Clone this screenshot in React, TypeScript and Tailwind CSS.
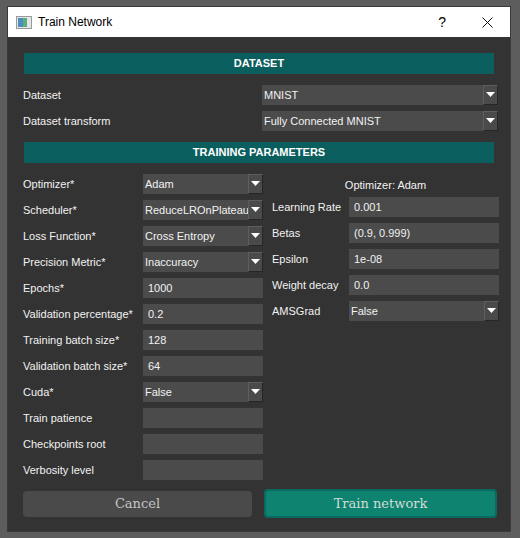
import React from "react";

const font = { fontFamily: '"Liberation Sans", Arial, sans-serif' };

const Arrow = () => (
  <div className="w-[15px] h-[20px] shrink-0 bg-[#4a4a4a] border-t border-l border-t-[#5e5e5e] border-l-[#5e5e5e] border-b border-r border-b-[#262626] border-r-[#262626] flex items-center justify-center">
    <svg width="9" height="6" viewBox="0 0 9 6">
      <polygon points="0,0 9,0 4.5,5" fill="#ffffff" />
    </svg>
  </div>
);

const Select = ({ value, w }: { value: string; w: string }) => (
  <div className={`${w} h-[20px] flex bg-[#4b4b4b]`}>
    <div className="flex-1 flex items-center pl-[2px] text-[11px] text-[#f2f2f2] overflow-hidden whitespace-nowrap">
      {value}
    </div>
    <Arrow />
  </div>
);

const Input = ({ value, w }: { value: string; w: string }) => (
  <div className={`${w} h-[20px] flex items-center pl-[5px] bg-[#4b4b4b] text-[11px] text-[#f2f2f2]`}>
    {value}
  </div>
);

const Header = ({ title }: { title: string }) => (
  <div className="w-[470px] h-[21px] ml-[16px] bg-[#0b5e5e] flex items-center justify-center text-[11px] font-bold text-white">
    {title}
  </div>
);

const leftRows: { label: string; value: string; select?: boolean }[] = [
  { label: "Optimizer*", value: "Adam", select: true },
  { label: "Scheduler*", value: "ReduceLROnPlateau", select: true },
  { label: "Loss Function*", value: "Cross Entropy", select: true },
  { label: "Precision Metric*", value: "Inaccuracy", select: true },
  { label: "Epochs*", value: "1000" },
  { label: "Validation percentage*", value: "0.2" },
  { label: "Training batch size*", value: "128" },
  { label: "Validation batch size*", value: "64" },
  { label: "Cuda*", value: "False", select: true },
  { label: "Train patience", value: "" },
  { label: "Checkpoints root", value: "" },
  { label: "Verbosity level", value: "" },
];

const rightRows: { label: string; value: string; select?: boolean }[] = [
  { label: "Learning Rate", value: "0.001" },
  { label: "Betas", value: "(0.9, 0.999)" },
  { label: "Epsilon", value: "1e-08" },
  { label: "Weight decay", value: "0.0" },
  { label: "AMSGrad", value: "False", select: true },
];

export default function App() {
  return (
    <div className="w-[520px] h-[538px] bg-[#5d5d5d] pt-[6px] pl-[7px]" style={font}>
      <div className="w-[504px] h-[526px] border border-[#3a3a3a] bg-[#333333] flex flex-col">
        {/* title bar */}
        <div className="h-[30px] bg-white flex items-center shrink-0">
          <svg width="16" height="13" viewBox="0 0 16 13" className="ml-[8px]">
            <rect x="0.5" y="0.5" width="15" height="12" fill="#e6e6e6" stroke="#9a9a9a" />
            <rect x="2" y="2" width="5" height="9" fill="#4a8fbf" />
            <rect x="7" y="2" width="4" height="9" fill="#5fae7a" />
            <rect x="11" y="2" width="3" height="9" fill="#dfe6ee" />
          </svg>
          <span className="ml-[6px] text-[12px] text-black">Train Network</span>
          <span className="ml-auto text-[14px] text-black mr-[36px]">?</span>
          <svg width="11" height="11" viewBox="0 0 11 11" className="mr-[17px]">
            <path d="M0.5 0.5 L10.5 10.5 M10.5 0.5 L0.5 10.5" stroke="#111" strokeWidth="1" />
          </svg>
        </div>

        <div className="mt-[16px]">
          <Header title="DATASET" />
        </div>
        <div className="mt-[11px] flex flex-col gap-[6px] pl-[15px]">
          <div className="flex items-center">
            <div className="w-[239px] text-[11px] text-[#f2f2f2]">Dataset</div>
            <Select value="MNIST" w="w-[236px]" />
          </div>
          <div className="flex items-center">
            <div className="w-[239px] text-[11px] text-[#f2f2f2]">Dataset transform</div>
            <Select value="Fully Connected MNIST" w="w-[236px]" />
          </div>
        </div>
        <div className="mt-[11px]">
          <Header title="TRAINING PARAMETERS" />
        </div>

        <div className="mt-[11px] flex pl-[15px]">
          <div className="flex flex-col gap-[6px]">
            {leftRows.map((r) => (
              <div key={r.label} className="flex items-center">
                <div className="w-[120px] text-[11px] text-[#f2f2f2]">{r.label}</div>
                {r.select ? <Select value={r.value} w="w-[120px]" /> : <Input value={r.value} w="w-[120px]" />}
              </div>
            ))}
          </div>
          <div className="ml-[9px] flex flex-col">
            <div className="h-[23px] flex items-center justify-center text-[11px] text-[#f2f2f2] w-[227px]">
              Optimizer: Adam
            </div>
            <div className="flex flex-col gap-[6px]">
              {rightRows.map((r) => (
                <div key={r.label} className="flex items-center">
                  <div className="w-[77px] text-[11px] text-[#f2f2f2]">{r.label}</div>
                  {r.select ? <Select value={r.value} w="w-[150px]" /> : <Input value={r.value} w="w-[150px]" />}
                </div>
              ))}
            </div>
          </div>
        </div>

        <div className="mt-[9px] flex items-center pl-[15px] gap-[12px]" style={{ fontFamily: '"DejaVu Serif", serif' }}>
          <button className="w-[229px] h-[26px] rounded-[4px] bg-[#4a4a4a] text-[13px] text-[#c4c4c4]">Cancel</button>
          <button className="w-[233px] h-[29px] rounded-[4px] bg-[#0e8370] border-2 border-[#0a6a60] text-[13px] text-[#d2dcd6]">
            Train network
          </button>
        </div>
      </div>
    </div>
  );
}
